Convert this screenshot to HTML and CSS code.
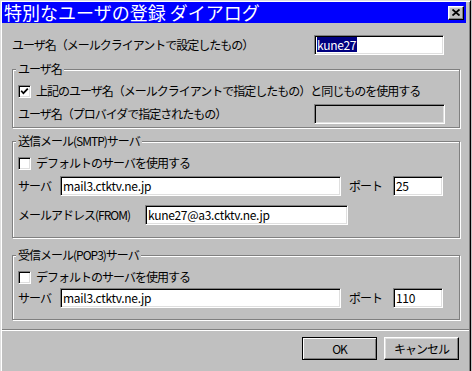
FILE: index.html
```html
<!DOCTYPE html>
<html>
<head>
    <title>特別なユーザの登録 ダイアログ</title>
    <link rel="stylesheet" href="styles.css">
</head>
<body>
    <div class="window">
        <div class="titlebar">
            <span class="title">特別なユーザの登録 ダイアログ</span>
            <span class="close-btn">
                <svg width="8" height="7" viewBox="0 0 8 7"><path d="M0.5 0.5 L7.5 6.5 M7.5 0.5 L0.5 6.5" stroke="#000" stroke-width="1.8" fill="none"/></svg>
            </span>
        </div>

        <div class="content">
            <div class="top-row">
                <span class="lbl">ユーザ名（メールクライアントで設定したもの）</span>
                <span class="field w-user"><span class="selected">kune27</span></span>
            </div>

            <div class="group group-user">
                <span class="group-title">ユーザ名</span>
                <div class="check-row first">
                    <span class="box"><svg width="9" height="9" viewBox="0 0 9 9"><path d="M1.2 3.8 L3.4 6.2 L7.8 1.6" stroke="#000" stroke-width="1.7" fill="none"/></svg></span>
                    <span class="lbl">上記のユーザ名（メールクライアントで指定したもの）と同じものを使用する</span>
                </div>
                <div class="provider-row">
                    <span class="lbl">ユーザ名（プロバイダで指定されたもの）</span>
                    <span class="field disabled w-provider"></span>
                </div>
            </div>

            <div class="group group-smtp">
                <span class="group-title">送信メール(SMTP)サーバ</span>
                <div class="check-row first">
                    <span class="box"></span>
                    <span class="lbl">デフォルトのサーバを使用する</span>
                </div>
                <div class="field-row server-row">
                    <span class="lbl lbl-server">サーバ</span>
                    <span class="field w-server">mail3.ctktv.ne.jp</span>
                    <span class="lbl lbl-port">ポート</span>
                    <span class="field w-port">25</span>
                </div>
                <div class="field-row from-row">
                    <span class="lbl lbl-from">メールアドレス(FROM)</span>
                    <span class="field w-from">kune27@a3.ctktv.ne.jp</span>
                </div>
            </div>

            <div class="group group-pop">
                <span class="group-title">受信メール(POP3)サーバ</span>
                <div class="check-row first">
                    <span class="box"></span>
                    <span class="lbl">デフォルトのサーバを使用する</span>
                </div>
                <div class="field-row pop-row">
                    <span class="lbl lbl-server">サーバ</span>
                    <span class="field w-server">mail3.ctktv.ne.jp</span>
                    <span class="lbl lbl-port">ポート</span>
                    <span class="field w-port">110</span>
                </div>
            </div>
        </div>

        <div class="separator"></div>

        <div class="buttons">
            <span class="btn btn-default">OK</span>
            <span class="btn">キャンセル</span>
        </div>
    </div>
</body>
</html>
```

FILE: styles.css
```css
* {
    box-sizing: border-box;
}
body {
    margin: 0;
    background: #c0c0c0;
    font-family: "Noto Sans CJK JP", sans-serif;
    font-size: 12px;
    color: #000;
    overflow: hidden;
}
.window {
    width: 471px;
    height: 380px;
    padding: 1px;
    background: #c0c0c0;
    border: 1px solid;
    border-color: #dfdfdf #000 #000 #dfdfdf;
    box-shadow: inset 1px 1px #fff, inset -1px -1px #808080;
}

/* title bar */
.titlebar {
    height: 21px;
    margin-right: 3px;
    padding: 0 2px;
    background: #0000ff;
    color: #fff;
    display: flex;
    align-items: center;
    justify-content: space-between;
}
.title {
    font-size: 18px;
    line-height: 21px;
}
.close-btn {
    width: 16px;
    height: 14px;
    background: #c0c0c0;
    border: 1px solid;
    border-color: #fff #000 #000 #fff;
    box-shadow: inset -1px -1px #808080, inset 1px 1px #dfdfdf;
    display: flex;
    align-items: center;
    justify-content: center;
}
.close-btn svg {
    display: block;
}

/* body */
.content {
    padding: 12px 0 0 10px;
}
.lbl {
    letter-spacing: -1px;
    white-space: nowrap;
    line-height: 16px;
}
.top-row {
    width: 432px;
    height: 20px;
    display: flex;
    align-items: center;
    justify-content: space-between;
}
.field {
    display: block;
    height: 20px;
    padding: 1px 2px 0;
    background: #fff;
    border: 1px solid;
    border-color: #808080 #fff #fff #808080;
    box-shadow: inset 1px 1px #000, inset -1px -1px #dfdfdf;
    line-height: 16px;
    white-space: nowrap;
    overflow: hidden;
    letter-spacing: -0.3px;
}
.field.disabled {
    background: #c0c0c0;
}
.selected {
    display: inline-block;
    background: #000080;
    color: #fff;
    line-height: 15px;
    padding-right: 1px;
}
.w-user { width: 130px; }
.w-provider { width: 131px; }
.w-server { width: 281px; }
.w-port { width: 50px; }
.w-from { width: 203px; }

/* group boxes */
.group {
    width: 448px;
    margin-top: 14px;
    padding: 0 14px 3px 5px;
    border: 1px solid #808080;
    box-shadow: 1px 1px #fff, inset 1px 1px #fff;
    display: flex;
    flex-direction: column;
}
.group-smtp {
    margin-top: 13px;
    padding-bottom: 12px;
}
.group-pop {
    margin-top: 17px;
    padding-bottom: 11px;
}
.group-title {
    align-self: flex-start;
    margin: -8px 0 0 -2px;
    padding: 0 2px;
    height: 14px;
    line-height: 14px;
    background: #c0c0c0;
    letter-spacing: -1px;
}
.check-row {
    height: 16px;
    display: flex;
    align-items: center;
}
.check-row.first {
    margin-top: 7px;
}
.box {
    width: 13px;
    height: 13px;
    margin-right: 5px;
    background: #fff;
    border: 1px solid;
    border-color: #808080 #fff #fff #808080;
    box-shadow: inset 1px 1px #000, inset -1px -1px #dfdfdf;
    display: flex;
    align-items: center;
    justify-content: center;
}
.box svg {
    display: block;
}
.provider-row {
    margin-top: 5px;
    display: flex;
    justify-content: space-between;
    align-items: center;
}
.field-row {
    display: flex;
    align-items: center;
}
.server-row {
    margin-top: 5px;
}
.from-row {
    margin-top: 9px;
}
.pop-row {
    margin-top: 3px;
}
.lbl-server {
    width: 42px;
}
.lbl-port {
    width: 44px;
    margin-left: 8px;
}
.lbl-from {
    width: 127px;
}

/* bottom */
.separator {
    margin-top: 9px;
    height: 2px;
    border-top: 1px solid #808080;
    border-bottom: 1px solid #fff;
}
.buttons {
    margin-top: 6px;
    padding-right: 10px;
    display: flex;
    justify-content: flex-end;
    gap: 7px;
}
.btn {
    width: 75px;
    height: 23px;
    border: 1px solid;
    border-color: #fff #000 #000 #fff;
    box-shadow: inset -1px -1px #808080, inset 1px 1px #dfdfdf;
    display: flex;
    align-items: center;
    justify-content: center;
    letter-spacing: -1px;
}
.btn-default {
    border-color: #000;
    box-shadow: inset 1px 1px #fff, inset -1px -1px #808080;
}
```
